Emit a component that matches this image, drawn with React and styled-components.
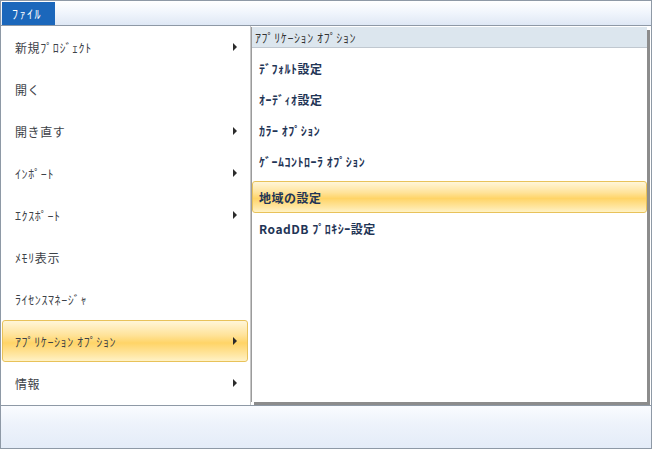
import React from 'react';
import styled, { createGlobalStyle, css } from 'styled-components';

const GlobalStyle = createGlobalStyle`
  html, body { margin: 0; padding: 0; background: #fff; }
  body { font-family: "Noto Sans CJK JP", "Noto Sans", sans-serif; }
`;

const leftItems = [
  { label: '新規ﾌﾟﾛｼﾞｪｸﾄ', sub: true },
  { label: '開く' },
  { label: '開き直す', sub: true },
  { label: 'ｲﾝﾎﾟｰﾄ', sub: true },
  { label: 'ｴｸｽﾎﾟｰﾄ', sub: true },
  { label: 'ﾒﾓﾘ表示' },
  { label: 'ﾗｲｾﾝｽﾏﾈｰｼﾞｬ' },
  { label: 'ｱﾌﾟﾘｹｰｼｮﾝ ｵﾌﾟｼｮﾝ', sub: true, active: true },
  { label: '情報', sub: true },
];

const rightItems = [
  { label: 'ﾃﾞﾌｫﾙﾄ設定' },
  { label: 'ｵｰﾃﾞｨｵ設定' },
  { label: 'ｶﾗｰ ｵﾌﾟｼｮﾝ' },
  { label: 'ｹﾞｰﾑｺﾝﾄﾛｰﾗ ｵﾌﾟｼｮﾝ' },
  { label: '地域の設定', active: true },
  { label: 'RoadDB ﾌﾟﾛｷｼｰ設定' },
];

const hot = css`
  border: 1px solid #e8c25a;
  border-radius: 3px;
  background: linear-gradient(to bottom, #fff6d9 0%, #ffe39a 35%, #ffd467 55%, #ffe7a4 85%, #fff2c6 100%);
`;

const Window = styled.div`
  width: 652px;
  height: 449px;
  box-sizing: border-box;
  border: 1px solid #8e99a6;
  display: flex;
  flex-direction: column;
  overflow: hidden;
`;

const TopBar = styled.div`
  height: 24px;
  border-bottom: 1px solid #8e99a6;
  background: linear-gradient(to bottom, #ffffff 0%, #f0f5fc 50%, #dfe8f5 100%);
  display: flex;
  align-items: flex-end;
  padding-left: 1px;
`;

const FileTab = styled.div`
  width: 53px;
  height: 23px;
  background: #1b67bb;
  color: #fff;
  font-size: 12px;
  letter-spacing: 1.5px;
  display: flex;
  align-items: center;
  padding-left: 10px;
  box-sizing: border-box;
`;

const Body = styled.div`
  flex: 1;
  display: flex;
  background: #fff;
  min-height: 0;
`;

const LeftMenu = styled.div`
  width: 250px;
  border-right: 1px solid #c6c6c6;
  display: flex;
  flex-direction: column;
  padding: 0 2px 0 1px;
  box-sizing: border-box;
`;

const LeftItem = styled.div`
  height: 42px;
  box-sizing: border-box;
  display: flex;
  align-items: center;
  justify-content: space-between;
  padding: 0 10px 0 12px;
  font-size: 12px;
  letter-spacing: 0.6px;
  color: #3d4248;
  border: 1px solid transparent;
  ${p => p.$active && hot}
`;

const Arrow = styled.span`
  width: 0;
  height: 0;
  border-top: 4px solid transparent;
  border-bottom: 4px solid transparent;
  border-left: 4px solid #2b2b2b;
`;

const SubPanel = styled.div`
  flex: 1;
  margin: 1px 4px 3px 0;
  border-left: 1px solid #9b9b9b;
  box-shadow: 3px 3px 0 #8c8c8c;
  display: flex;
  flex-direction: column;
  background: #fff;
`;

const SubHeader = styled.div`
  height: 21px;
  background: #dce6ee;
  border-bottom: 1px solid #c0c8d0;
  box-sizing: border-box;
  padding-left: 3px;
  display: flex;
  align-items: center;
  font-size: 12px;
  letter-spacing: 0.6px;
  color: #333;
`;

const SubList = styled.div`
  padding-top: 5px;
  display: flex;
  flex-direction: column;
`;

const SubItem = styled.div`
  height: 31px;
  box-sizing: border-box;
  display: flex;
  align-items: center;
  padding-left: 6px;
  font-size: 12px;
  letter-spacing: 0.5px;
  font-weight: bold;
  color: #1f3556;
  border: 1px solid transparent;
  ${p => p.$active && css`
    ${hot}
    height: 32px;
    margin-top: 4px;
  `}
`;

const BottomBar = styled.div`
  height: 42px;
  border-top: 1px solid #8e99a6;
  background: linear-gradient(to bottom, #fafcff 0%, #eef3fb 40%, #e4ecf8 100%);
`;

export default function App() {
  return (
    <>
      <GlobalStyle />
      <Window>
        <TopBar>
          <FileTab>ﾌｧｲﾙ</FileTab>
        </TopBar>
        <Body>
          <LeftMenu>
            {leftItems.map(it => (
              <LeftItem key={it.label} $active={it.active}>
                <span>{it.label}</span>
                {it.sub && <Arrow />}
              </LeftItem>
            ))}
          </LeftMenu>
          <SubPanel>
            <SubHeader>ｱﾌﾟﾘｹｰｼｮﾝ ｵﾌﾟｼｮﾝ</SubHeader>
            <SubList>
              {rightItems.map(it => (
                <SubItem key={it.label} $active={it.active}>{it.label}</SubItem>
              ))}
            </SubList>
          </SubPanel>
        </Body>
        <BottomBar />
      </Window>
    </>
  );
}
